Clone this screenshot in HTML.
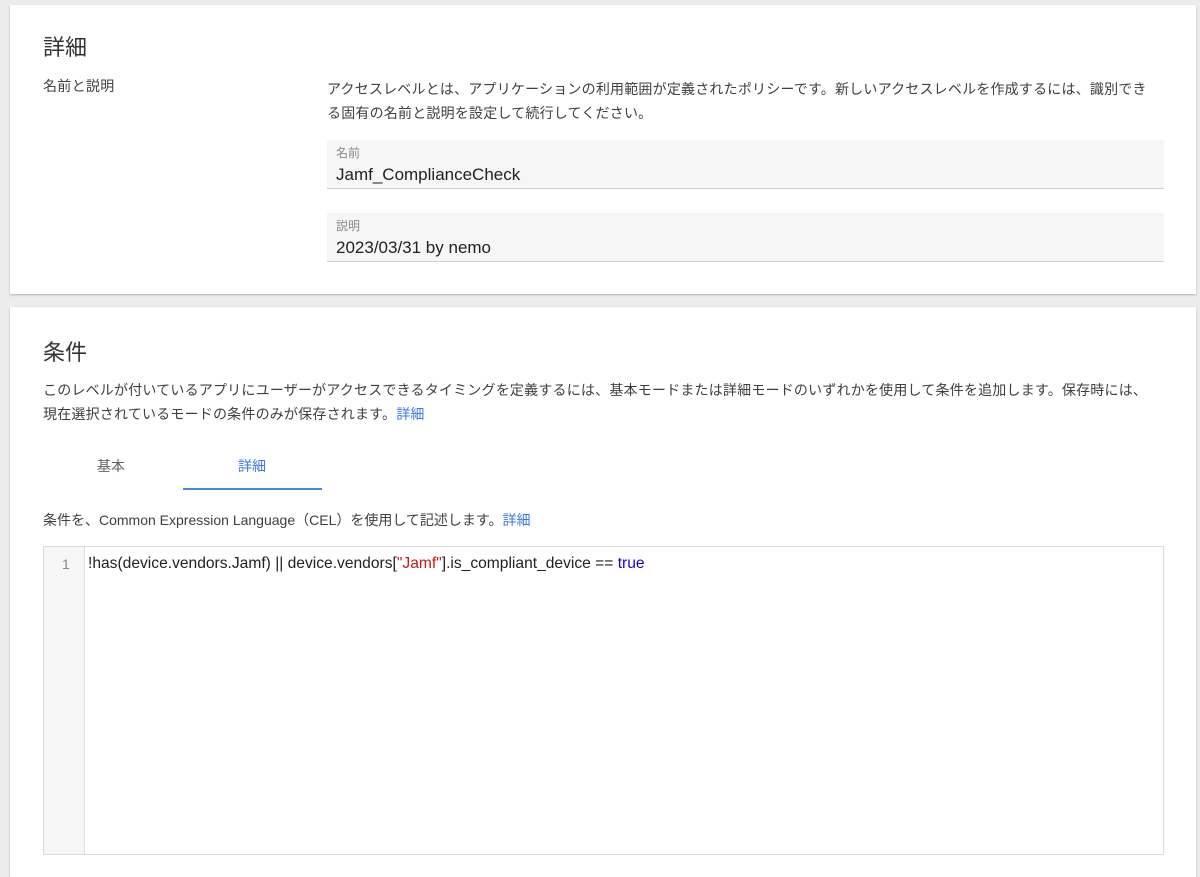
<!DOCTYPE html>
<html><head><meta charset="utf-8"><style>
body{margin:0;background:#ececec;width:1200px;height:866px;overflow:hidden;font-family:"Liberation Sans","Noto Sans CJK JP",sans-serif;color:#202124;position:relative}
.card{position:absolute;left:10px;width:1186px;background:#fff;box-shadow:0 1px 2px rgba(0,0,0,.25)}
.a{position:absolute;white-space:nowrap}
.field{position:absolute;left:327px;width:837px;height:48px;background:#f6f6f6;border-bottom:1px solid #d0d0d0}
.lk{color:#3b78e7}
</style></head><body>
<div class="card" style="top:5px;height:289px">
 <div class="a" style="left:33px;top:25px;font-size:22px;color:#333">詳細</div>
 <div class="a" style="left:33px;top:71px;font-size:14px;color:#3c4043;letter-spacing:.3px">名前と説明</div>
 <div class="a" style="left:317px;top:72px;font-size:14px;line-height:24px;color:#3c4043;white-space:normal;width:830px;letter-spacing:.2px">アクセスレベルとは、アプリケーションの利用範囲が定義されたポリシーです。新しいアクセスレベルを作成するには、識別できる固有の名前と説明を設定して続行してください。</div>
</div>
<div class="field" style="top:140px"><div class="a" style="left:9px;top:4px;font-size:12px;color:#888">名前</div><div class="a" style="left:9px;top:25px;font-size:17px">Jamf_ComplianceCheck</div></div>
<div class="field" style="top:213px"><div class="a" style="left:9px;top:4px;font-size:12px;color:#888">説明</div><div class="a" style="left:9px;top:25px;font-size:17px">2023/03/31 by nemo</div></div>
<div class="card" style="top:307px;height:570px">
 <div class="a" style="left:33px;top:28px;font-size:22px;color:#333">条件</div>
 <div class="a" style="left:33px;top:71px;font-size:14px;line-height:24px;color:#3c4043;white-space:normal;width:1112px;letter-spacing:.2px">このレベルが付いているアプリにユーザーがアクセスできるタイミングを定義するには、基本モードまたは詳細モードのいずれかを使用して条件を追加します。保存時には、現在選択されているモードの条件のみが保存されます。<span class="lk">詳細</span></div>
 <div class="a" style="left:87px;top:149px;font-size:14px;color:#5f6368">基本</div>
 <div class="a" style="left:228px;top:149px;font-size:14px;color:#3b78e7">詳細</div>
 <div class="a" style="left:173px;top:181px;width:139px;height:2px;background:#4a86e8"></div>
 <div class="a" style="left:33px;top:203px;font-size:14px;color:#3c4043">条件を、Common Expression Language（CEL）を使用して記述します。<span class="lk">詳細</span></div>
 <div class="a" style="left:33px;top:239px;width:1119px;height:307px;border:1px solid #dadada;background:#fff">
  <div class="a" style="left:0;top:0;width:40px;height:307px;background:#f6f6f6;border-right:1px solid #e0e0e0"></div>
  <div class="a" style="left:18px;top:9px;font-size:14px;color:#888">1</div>
  <div class="a" style="left:44px;top:8px;font-size:15.6px;color:#202124">!has(device.vendors.Jamf) || device.vendors[<span style="color:#c41a16">"Jamf"</span>].is_compliant_device == <span style="color:#1c00cf">true</span></div>
 </div>
</div>
</body></html>
